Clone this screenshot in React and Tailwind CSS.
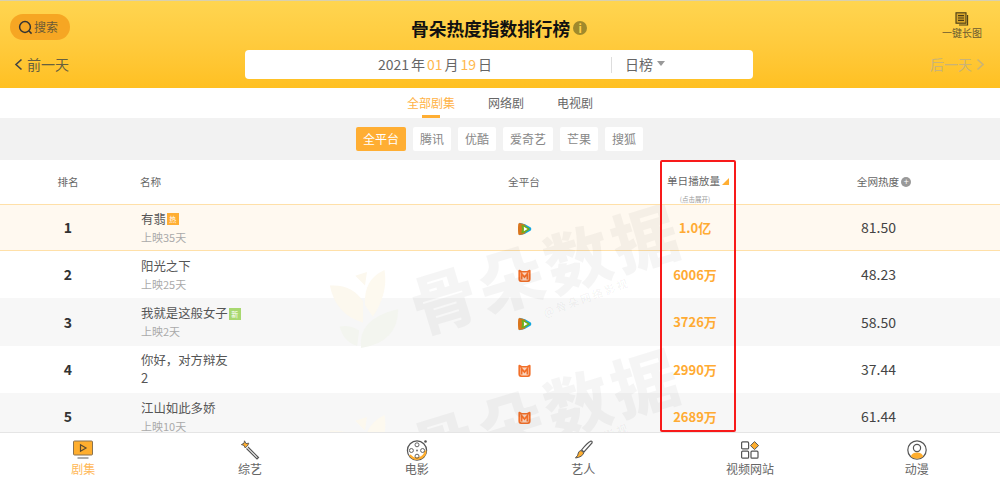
import React from "react";

const F = { fontFamily: '"Noto Sans CJK SC", "Noto Sans", sans-serif' };

function Tencent() {
  return (
    <svg width="14" height="14" viewBox="0 0 14 14" className="block">
      <path d="M1.5 .8 Q7 1.5 12.8 5.6 Q14 7 12.8 8.4 Q7 12.5 1.5 13.2 Q3 7 1.5 .8Z" fill="#12a8e0" />
      <path d="M1.5 .9 Q.2 .9 .2 2.4 Q-.2 7 .2 11.6 Q.2 13.1 1.5 13.1 Q5 12.8 7.4 11 Q8 7 7.4 3 Q5 1.2 1.5 .9Z" fill="#d9751c" />
      <path d="M3.4 2.4 Q8 3.6 11.4 6.2 Q12.3 7 11.4 7.8 Q8 10.4 3.4 11.6 Q4.6 7 3.4 2.4Z" fill="#6fae1c" />
      <path d="M5.8 4.8 L9.6 7 L5.8 9.2 Q6.2 7 5.8 4.8Z" fill="#fff" />
    </svg>
  );
}

function Mango() {
  return (
    <svg width="13" height="14" viewBox="0 0 13 14" className="block">
      <path d="M1.6 .8 L4 2 L9 2 L11.4 .8 Q12.6 .6 12.6 2 L12.6 10 Q12.6 13 10 13 L3 13 Q.4 13 .4 10 L.4 2 Q.4 .6 1.6 .8Z" fill="#f2702a" />
      <path d="M2.2 3.4 L10.8 3.4 L10.8 10 Q10.8 11.4 9.4 11.4 L3.6 11.4 Q2.2 11.4 2.2 10Z" fill="#fbd5bf" />
      <path d="M3.6 10.6 L3.6 4.6 L6.5 8 L9.4 4.6 L9.4 10.6" fill="none" stroke="#f2702a" strokeWidth="1.8" />
    </svg>
  );
}

function Watermark({ top }) {
  return (
    <div className="absolute left-0 top-0 w-[1000px] h-[227px]" style={{ top }}>
      <svg width="80" height="82" viewBox="0 0 76 84" className="absolute left-[325px] top-[63px]">
        <path d="M2 18 Q24 16 36 34 L36 56 Q8 48 2 18Z" fill="#fcf8ee" />
        <path d="M38 38 Q36 12 58 2 Q62 26 46 50Z" fill="#fdf9ef" />
        <path d="M28 8 L40 4 L38 18Z" fill="#fcf8ee" />
        <path d="M34 82 Q30 52 72 42 Q72 76 34 82Z" fill="#f3f5ef" />
        <path d="M12 60 Q22 58 32 64 L30 80 Q16 76 12 60Z" fill="#f3f5ef" />
      </svg>
      <div className="absolute left-[405px] top-[27px] w-[280px] text-center -rotate-[17deg] text-[66px] leading-[66px] font-black tracking-[4px] whitespace-nowrap text-[#000000]/[0.04]">骨朵数据</div>
      <div className="absolute left-[536px] top-[86px] w-[100px] text-center -rotate-[20deg] text-[11px] leading-[12px] font-bold tracking-[2px] whitespace-nowrap text-[#000000]/[0.04]">@骨朵网络影视</div>
    </div>
  );
}

const rows = [
  { n: 1, name: "有翡", tag: "热", tagC: "bg-[#ffae33]", sub: "上映35天", p: "t", v: "1.0亿", h: "81.50", rh: "h-[47px]", bg: "bg-[#fff9f0] border-y border-[#ffe0a8]" },
  { n: 2, name: "阳光之下", sub: "上映25天", p: "m", v: "6006万", h: "48.23", rh: "h-[47px]", bg: "bg-white" },
  { n: 3, name: "我就是这般女子", tag: "新", tagC: "bg-[#a8d870]", sub: "上映2天", p: "t", v: "3726万", h: "58.50", rh: "h-[48px]", bg: "bg-[#f7f7f7]" },
  { n: 4, name: "你好，对方辩友", name2: "2", p: "m", v: "2990万", h: "37.44", rh: "h-[47px]", bg: "bg-white" },
  { n: 5, name: "江山如此多娇", sub: "上映10天", p: "m", v: "2689万", h: "61.44", rh: "h-[47px]", bg: "bg-[#f7f7f7]" },
];

const GRID = "grid grid-cols-[136px_304px_168px_180px_180px_32px] items-center";

function Row({ r }) {
  return (
    <div className={`${GRID} ${r.rh} ${r.bg} shrink-0`}>
      <div className="text-center text-[14px] font-bold text-[#333]">{r.n}</div>
      <div className="pl-[5px] text-[#555]">
        <div className="flex items-center text-[12.4px] leading-[17px]">
          <span>{r.name}</span>
          {r.tag && (
            <span className={`${r.tagC} w-[12px] h-[12px] ml-[1px] text-white text-[7px] leading-[12px] text-center`}>{r.tag}</span>
          )}
        </div>
        {r.name2 && <div className="text-[13px] leading-[18px]">{r.name2}</div>}
        {r.sub && <div className="text-[11px] leading-[15px] mt-[2px] text-[#aaa]">{r.sub}</div>}
      </div>
      <div className="flex justify-center mt-[3px] pl-px">{r.p === "t" ? <Tencent /> : <Mango />}</div>
      <div className="text-center text-[13px] font-bold text-[#ffab33] pr-[6px]">{r.v}</div>
      <div className="text-center text-[14px] text-[#444] pl-px">{r.h}</div>
      <div />
    </div>
  );
}

const SW = { fill: "none", stroke: "#555", strokeWidth: 1.2 };

const nav = [
  {
    label: "剧集",
    active: true,
    icon: (
      <svg width="20" height="20" viewBox="0 0 20 20">
        <rect x=".5" y="1" width="19" height="14" rx="1" fill="#ffae2e" stroke="#8a7350" />
        <path d="M7.5 4.8 L13 8 L7.5 11.2Z" fill="#ffae2e" stroke="#5b4a30" strokeWidth="1.2" />
        <path d="M4.5 18 H15.5" stroke="#777" strokeWidth="1.2" />
      </svg>
    ),
  },
  {
    label: "综艺",
    icon: (
      <svg width="20" height="20" viewBox="0 0 20 20">
        <path d="M8 7 L18.5 17.5 L17 19 L6.5 8.5" {...SW} />
        <path d="M4.5 .8 L6 3.6 L8.8 3.2 L7.4 6 L5 7.8 L4 5.4 L1.4 4.6 L4 3.2Z" fill="#ffae2e" stroke="#555" strokeWidth=".9" />
      </svg>
    ),
  },
  {
    label: "电影",
    icon: (
      <svg width="22" height="22" viewBox="0 0 22 22">
        <circle cx="11" cy="11.5" r="9.6" {...SW} />
        <path d="M3 16.5 A9.6 9.6 0 0 0 20.6 11.5 L18.6 11.5 A8 8 0 0 1 4.5 15.5Z" fill="#ffae2e" />
        <circle cx="11" cy="5.8" r="2" {...SW} strokeWidth=".9" />
        <circle cx="11" cy="17.2" r="2" {...SW} strokeWidth=".9" />
        <circle cx="5.4" cy="11.5" r="2" {...SW} strokeWidth=".9" />
        <circle cx="16.6" cy="11.5" r="2" {...SW} strokeWidth=".9" />
        <circle cx="11" cy="11.5" r="1" fill="#777" />
        <circle cx="19.5" cy="2.5" r="1.3" fill="#555" />
      </svg>
    ),
  },
  {
    label: "艺人",
    icon: (
      <svg width="20" height="20" viewBox="0 0 20 20">
        <path d="M18 1 Q19.5 1 19 3 L11 12 L8.5 10 Q14 3 18 1Z" {...SW} />
        <path d="M8 10.5 L10.8 12.8 Q9.5 17 2.5 18 Q5.5 15 5.3 13 Q5.8 11 8 10.5Z" fill="#ffae2e" stroke="#555" strokeWidth="1" />
      </svg>
    ),
  },
  {
    label: "视频网站",
    icon: (
      <svg width="18" height="18" viewBox="0 0 18 18">
        <rect x=".6" y=".9" width="7" height="7" rx="1" {...SW} />
        <rect x=".6" y="10.2" width="7" height="7" rx="1" {...SW} />
        <rect x="10" y="10.2" width="7" height="7" rx="1" {...SW} />
        <path d="M13.5 .6 L17.6 4.6 L13.5 8.6 L9.5 4.6Z" fill="#ffae2e" stroke="#555" strokeWidth="1" />
      </svg>
    ),
  },
  {
    label: "动漫",
    icon: (
      <svg width="20" height="20" viewBox="0 0 20 20">
        <circle cx="10" cy="10" r="9.2" {...SW} />
        <path d="M3.8 16.6 Q5 12.6 10 12.6 Q15 12.6 16.2 16.6 Q10 21 3.8 16.6Z" fill="#ffae2e" />
        <circle cx="10" cy="8" r="3.6" {...SW} />
      </svg>
    ),
  },
];

export default function App() {
  return (
    <div className="relative w-[1000px] h-[480px] overflow-hidden bg-white flex flex-col" style={F}>
      <div className="h-px bg-[#d8d0ae] shrink-0" />
      {/* header */}
      <div className="h-[87px] shrink-0 bg-gradient-to-b from-[#ffd550] to-[#ffc021] flex flex-col">
        <div className="h-[49px] flex items-start">
          <div className="ml-[10px] mt-[13px] w-[60px] h-[26px] rounded-full bg-[#f6a623] flex items-center pl-[8px] gap-[1px] text-[#6b5a36] text-[12px]">
            <svg width="15" height="15" viewBox="0 0 15 15" fill="none" stroke="#333" strokeWidth="1.5">
              <circle cx="7" cy="7" r="5.4" />
              <path d="M11 11 L13.6 13.6" />
            </svg>
            <span>搜索</span>
          </div>
          <div className="ml-[341px] mt-[14px] flex items-center">
            <span className="text-[17.7px] leading-[26px] font-bold text-[#111]">骨朵热度指数排行榜</span>
            <span className="ml-[3px] w-[14px] h-[14px] rounded-full bg-[#a08a2c] text-[#ffd34a] text-[11px] leading-[14px] font-bold text-center">i</span>
          </div>
          <div className="ml-auto mr-[18px] mt-[11px] w-[40px] flex flex-col items-center text-[10px] leading-[12px] text-[#6b5a30]">
            <svg width="14" height="14" viewBox="0 0 14 14" fill="none" stroke="#4a3c16" strokeWidth="1.1">
              <rect x="1" y=".8" width="10" height="10.4" fill="#d8a52a" />
              <path d="M3 3.6 H9 M3 6 H9 M3 8.4 H9" />
              <path d="M12.6 3 V13 H4" />
            </svg>
            <span className="mt-[1px] whitespace-nowrap">一键长图</span>
          </div>
        </div>
        <div className="h-[29px] flex items-center relative">
          <div className="w-[245px] flex items-center pl-[14px] text-[14px] text-[#66603f]">
            <svg width="9" height="13" viewBox="0 0 9 13" fill="none" stroke="#444" strokeWidth="1.6">
              <path d="M7.5 1.5 L2 6.5 L7.5 11.5" />
            </svg>
            <span className="ml-[4px]">前一天</span>
          </div>
          <div className="w-[508px] h-[29px] rounded-[4px] bg-white flex items-center text-[14px] text-[#666]">
            <div className="w-[366px] pl-[16px] pr-[2px] flex justify-center gap-[2px]">
              <span>2021</span><span>年</span><span className="text-[#ffb84d]">01</span><span>月</span><span className="text-[#ffb84d]">19</span><span>日</span>
            </div>
            <div className="w-px h-[16px] bg-[#ddd]" />
            <span className="ml-[13px]">日榜</span>
            <span className="ml-[4px] mb-[3px] w-0 h-0 border-x-[4px] border-x-transparent border-t-[5px] border-t-[#999]" />
          </div>
          <div className="ml-auto mr-[15px] flex items-center text-[14px] text-[#c9b377]">
            <span>后一天</span>
            <svg className="ml-[4px]" width="9" height="13" viewBox="0 0 9 13" fill="none" stroke="#c9b377" strokeWidth="1.6">
              <path d="M1.5 1.5 L7 6.5 L1.5 11.5" />
            </svg>
          </div>
        </div>
      </div>
      {/* tabs */}
      <div className="h-[30px] shrink-0 bg-white flex justify-center items-center gap-[33px] text-[12px] text-[#666]">
        <div className="relative h-[30px] flex items-center text-[#ffb347]">
          全部剧集
          <span className="absolute bottom-0 left-[15px] w-[18px] h-[3px] bg-[#ffae33]" />
        </div>
        <div>网络剧</div>
        <div>电视剧</div>
      </div>
      {/* platform filter */}
      <div className="h-[42px] shrink-0 bg-[#f2f2f2] flex justify-center items-center gap-[7px] text-[12px] text-[#888] pr-[1px]">
        <div className="h-[24px] leading-[24px] w-[50px] text-center rounded-[2px] bg-[#ffae33] text-white">全平台</div>
        <div className="h-[24px] leading-[24px] w-[38px] text-center rounded-[2px] bg-white">腾讯</div>
        <div className="h-[24px] leading-[24px] w-[38px] text-center rounded-[2px] bg-white">优酷</div>
        <div className="h-[24px] leading-[24px] w-[50px] text-center rounded-[2px] bg-white">爱奇艺</div>
        <div className="h-[24px] leading-[24px] w-[38px] text-center rounded-[2px] bg-white">芒果</div>
        <div className="h-[24px] leading-[24px] w-[38px] text-center rounded-[2px] bg-white">搜狐</div>
      </div>
      {/* table */}
      <div className={`${GRID} h-[44px] shrink-0 bg-white text-[10.6px] text-[#666]`}>
        <div className="text-center">排名</div>
        <div className="pl-[4px]">名称</div>
        <div className="text-center">全平台</div>
        <div className="self-start flex flex-col items-center">
          <div className="flex items-center leading-[14px] mt-[14px]">
            单日播放量
            <span className="ml-[2px] w-0 h-0 border-l-[7px] border-l-transparent border-b-[7px] border-b-[#ffae33]" />
          </div>
          <div className="text-[6.5px] leading-[8px] mt-[7px] text-[#999] pr-[6px]">(点击展开)</div>
        </div>
        <div className="flex items-center justify-center pl-[12px]">
          全网热度
          <span className="ml-[2px] w-[10px] h-[10px] rounded-full bg-[#999] text-white text-[9px] leading-[10px] text-center">+</span>
        </div>
        <div />
      </div>
      <div className="flex-1 min-h-0 overflow-hidden">
        {rows.map((r) => (
          <Row key={r.n} r={r} />
        ))}
      </div>
      {/* bottom nav */}
      <div className="relative z-10 h-[48px] shrink-0 bg-white border-t border-[#e5e5e5] grid grid-cols-6">
        {nav.map((n) => (
          <div key={n.label} className="flex flex-col items-center">
            <div className="h-[23px] mt-[5px] flex items-center justify-center">{n.icon}</div>
            <div className={`text-[12px] leading-[14px] mt-[1px] ${n.active ? "text-[#ffb95a]" : "text-[#666]"}`}>{n.label}</div>
          </div>
        ))}
      </div>
      {/* watermarks over the table */}
      <div className="absolute left-0 right-0 top-[205px] h-[227px] overflow-hidden pointer-events-none">
        <Watermark top="0px" />
        <Watermark top="145px" />
      </div>
      {/* red highlight box */}
      <div className="absolute left-[660px] top-[160px] w-[76px] h-[272px] border-2 border-[#f81a1a] rounded-[2px] pointer-events-none" />
    </div>
  );
}
